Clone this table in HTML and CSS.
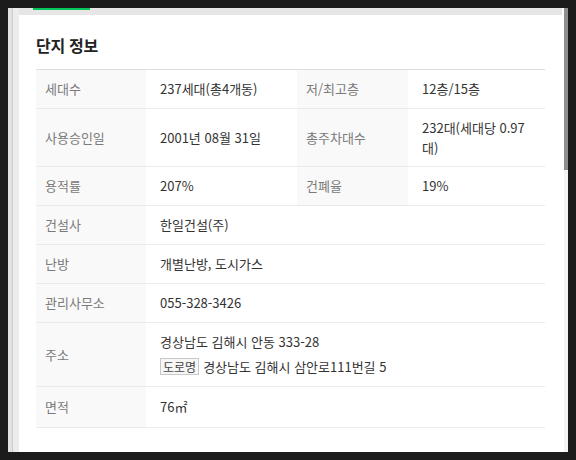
FILE: index.html
```html
<!DOCTYPE html>
<html lang="ko">
<head>
<meta charset="utf-8">
<link rel="stylesheet" href="styles.css">
</head>
<body>
<div class="frame">
  <div class="side"><div class="side-a"></div><div class="side-b"></div></div>
  <div class="main">
    <div class="topstrip"><div class="tab-active"></div></div>
    <div class="content">
      <h2 class="title">단지 정보</h2>
      <table class="info">
        <colgroup>
          <col class="c-th1"><col class="c-td1"><col class="c-th2"><col class="c-td2">
        </colgroup>
        <tbody>
          <tr>
            <th>세대수</th><td>237세대(총4개동)</td>
            <th>저/최고층</th><td>12층/15층</td>
          </tr>
          <tr class="tall">
            <th>사용승인일</th><td>2001년 08월 31일</td>
            <th>총주차대수</th><td>232대(세대당 0.97 대)</td>
          </tr>
          <tr>
            <th>용적률</th><td>207%</td>
            <th>건폐율</th><td>19%</td>
          </tr>
          <tr>
            <th>건설사</th><td colspan="3">한일건설(주)</td>
          </tr>
          <tr>
            <th>난방</th><td colspan="3">개별난방, 도시가스</td>
          </tr>
          <tr>
            <th>관리사무소</th><td colspan="3">055-328-3426</td>
          </tr>
          <tr>
            <th>주소</th>
            <td colspan="3">
              <div class="addr">경상남도 김해시 안동 333-28</div>
              <div class="addr road"><span class="badge">도로명</span><span>경상남도 김해시 삼안로111번길 5</span></div>
            </td>
          </tr>
          <tr class="last">
            <th>면적</th><td colspan="3">76㎡</td>
          </tr>
        </tbody>
      </table>
    </div>
  </div>
  <div class="scroll"><div class="thumb"></div></div>
</div>
</body>
</html>
```

FILE: styles.css
```css
html, body {
  margin: 0;
  padding: 0;
}
body {
  background: #1b1b1b;
  width: 576px;
  height: 460px;
  overflow: hidden;
  font-family: "Noto Sans CJK KR", "Noto Sans", sans-serif;
}
.frame {
  margin: 8px;
  width: 560px;
  height: 444px;
  display: flex;
  background: #ffffff;
}
.side {
  display: flex;
  width: 11px;
  flex: none;
}
.side-a {
  width: 4px;
  background: #e2e2e2;
  border-right: 1px solid #cdcdcd;
}
.side-b {
  flex: 1;
  background: #ececec;
}
.main {
  flex: 1;
  display: flex;
  flex-direction: column;
  min-width: 0;
}
.topstrip {
  height: 7px;
  background: #e6e6e6;
  margin-right: 2px;
  flex: none;
}
.tab-active {
  margin-left: 14px;
  width: 57px;
  height: 2px;
  background: #03c75a;
}
.content {
  padding: 18px 19px 0 17px;
}
.title {
  margin: 0;
  font-size: 16px;
  font-weight: 700;
  line-height: 24px;
  color: #222;
  height: 36px;
  letter-spacing: -0.3px;
}
.info {
  width: 509px;
  table-layout: fixed;
  border-collapse: collapse;
  border-top: 1px solid #dedede;
  font-size: 13px;
  line-height: 20px;
}
.c-th1 { width: 110px; }
.c-td1 { width: 151px; }
.c-th2 { width: 111px; }
.c-td2 { width: 137px; }
.info tr {
  border-bottom: 1px solid #ebebeb;
}
.info th {
  background: #f9f9f9;
  color: #7a7a7a;
  font-weight: 400;
  text-align: left;
  padding: 9px 8px 9px 9px;
  vertical-align: middle;
}
.info td {
  color: #333;
  padding: 9px 10px 9px 14px;
  vertical-align: middle;
}
.info tr.tall th,
.info tr.tall td {
  padding-bottom: 8px;
}
.info tr.last th,
.info tr.last td {
  padding-top: 10px;
  padding-bottom: 10px;
}
.addr.road {
  margin-top: 4px;
  display: flex;
  align-items: center;
  height: 21px;
  gap: 4px;
}
.badge {
  display: inline-block;
  box-sizing: border-box;
  height: 17px;
  line-height: 15px;
  padding: 0 2px;
  font-size: 12px;
  border: 1px solid #c9c9c9;
  background: #f6f6f6;
  color: #444;
}
.scroll {
  width: 4px;
  flex: none;
  background: #f3f3f3;
  display: flex;
  flex-direction: column;
}
.thumb {
  height: 162px;
  background: #8e8e8e;
}
```
